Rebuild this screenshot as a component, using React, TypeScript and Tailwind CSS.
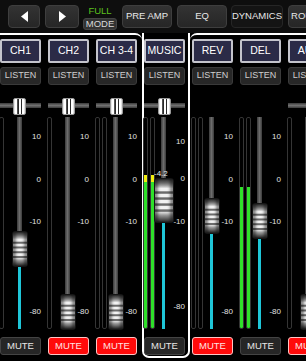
import React from "react";

const NARROW = "font-['Liberation_Sans_Narrow','Liberation_Sans',Arial,sans-serif]";

const FADER_KNOB =
  "bg-[linear-gradient(to_bottom,#3a3a3a_0%,#666_9%,#a8a8a8_16%,#f2f2f2_22%,#f2f2f2_27%,#6c6c6c_30%,#6c6c6c_33%,#f2f2f2_36%,#f2f2f2_41%,#6c6c6c_44%,#6c6c6c_47%,#f2f2f2_50%,#f2f2f2_55%,#6c6c6c_58%,#6c6c6c_61%,#f2f2f2_64%,#f2f2f2_69%,#6c6c6c_72%,#6c6c6c_75%,#d8d8d8_78%,#9a9a9a_84%,#606060_92%,#333_100%)] border border-[#151515] rounded-[3px] shadow-[inset_3px_0_3px_rgba(0,0,0,0.45),inset_-3px_0_3px_rgba(0,0,0,0.45)]";

const PAN_KNOB =
  "bg-[linear-gradient(to_right,#d8d8d8_0%,#fff_12%,#fff_31%,#2a2a2a_32%,#2a2a2a_46%,#fff_47%,#fff_61%,#2a2a2a_62%,#2a2a2a_76%,#fff_77%,#fff_88%,#cfcfcf_100%)] border border-[#9a9a9a] rounded-[2px]";

type StripData = {
  name: string;
  meters: number[];
  yellow?: boolean;
  panTrack: boolean;
  pan: number | null;
  knobTop: number;
  big?: boolean;
  muted: boolean;
  labels?: number[];
  readout?: string;
  widthClass: string;
};

const DEFAULT_LABELS = [20, 63, 105, 195];
const LABEL_TEXT = ["10", "0", "-10", "-80"];

function Meter({ level, yellow }: { level: number; yellow?: boolean }) {
  return (
    <div className="w-[5px] h-full border border-[#353535] rounded-[2px] flex flex-col justify-end overflow-hidden">
      {level > 0 && (
        <div className="w-full flex flex-col" style={{ height: level }}>
          {yellow && <div className="h-[7px] bg-[#f0ee10]" />}
          <div className="flex-1 bg-[#2fe02a]" />
        </div>
      )}
    </div>
  );
}

function Strip({ s }: { s: StripData }) {
  const kh = s.big ? 45 : 36;
  const labels = s.labels ?? DEFAULT_LABELS;
  return (
    <div className={`shrink-0 flex flex-col ${s.widthClass}`}>
      <div className="mt-[4px] h-[24px] w-[41px] flex items-center justify-center border-2 border-[#c4c4cc] bg-[#2b2b47] text-white text-[10.5px] rounded-[2px] whitespace-nowrap">
        {s.name}
      </div>
      <div className="mt-[4px] h-[18px] w-[41px] flex items-center justify-center rounded-[3px] border border-[#3a3a3a] bg-[#272727] text-[9px] text-[#cfcfcf]">
        LISTEN
      </div>
      <div className="relative h-[32px] w-[41px] pt-[18px]">
        {s.panTrack && (
          <div className="h-[5px] w-full bg-[linear-gradient(to_bottom,#3a3a3a,#707070,#3a3a3a)]" />
        )}
        {s.pan !== null && (
          <div className={`absolute top-[13px] w-[13px] h-[17px] ${PAN_KNOB}`} style={{ left: s.pan }} />
        )}
      </div>
      <div className="relative h-[213px] w-[41px] flex">
        <div className="-ml-[1px] w-[17px] h-[212px] flex gap-[2px]">
          {s.meters.map((m, i) => (
            <Meter key={i} level={m} yellow={s.yellow} />
          ))}
        </div>
        <div className="ml-[1px] w-[5px] h-[212px] flex flex-col items-center">
          <div
            className="w-[5px] shrink-0 bg-[linear-gradient(to_right,#3a3a3a,#6c6c6c,#3a3a3a)]"
            style={{ height: s.knobTop + kh / 2 }}
          />
          <div className="w-[3px] flex-1 bg-[#1fc6d8]" />
        </div>
        {labels.map((c, i) => (
          <div
            key={i}
            className="absolute right-0 text-[8px] leading-[10px] text-[#e2e2e2]"
            style={{ top: c - 5 }}
          >
            {LABEL_TEXT[i]}
          </div>
        ))}
        {s.readout && (
          <div className="absolute left-[10px] top-[52px] text-[8px] leading-[10px] text-[#e6e6e6]">{s.readout}</div>
        )}
        <div
          className={`absolute ${s.big ? "w-[20px] h-[45px] left-[10px]" : "w-[16px] h-[36px] left-[12px]"} ${FADER_KNOB}`}
          style={{ top: s.knobTop }}
        />
      </div>
      <div
        className={`mt-[7px] h-[18px] w-[41px] flex items-center justify-center rounded-[3px] text-[9.5px] ${
          s.muted
            ? "bg-[#ff0a0a] border border-[#ffc4c4] text-[#ffe4e4]"
            : "bg-[#262626] border border-[#444] text-[#e6e6e6]"
        }`}
      >
        MUTE
      </div>
    </div>
  );
}

function TopBtn({
  cls,
  selected,
  children,
}: {
  cls: string;
  selected?: boolean;
  children: React.ReactNode;
}) {
  return (
    <div
      className={`h-[23px] shrink-0 flex items-center justify-center rounded-[4px] border text-[9.5px] text-[#e8e8e8] whitespace-nowrap overflow-hidden ${
        selected
          ? "bg-[#141414] border-[#262626]"
          : "bg-[linear-gradient(to_bottom,#333,#262626)] border-[#3e3e3e]"
      } ${cls}`}
    >
      {children}
    </div>
  );
}

const group1: StripData[] = [
  { name: "CH1", meters: [0], panTrack: true, pan: 13, knobTop: 114, muted: false, widthClass: "w-[48px]" },
  { name: "CH2", meters: [0], panTrack: true, pan: 14, knobTop: 177, muted: true, widthClass: "w-[48px]" },
  { name: "CH 3-4", meters: [0, 0], panTrack: true, pan: 14, knobTop: 177, muted: true, widthClass: "w-[46px]" },
];

const music: StripData = {
  name: "MUSIC",
  meters: [153, 153],
  yellow: true,
  panTrack: true,
  pan: 14,
  knobTop: 61,
  big: true,
  muted: false,
  labels: [25, 62, 105, 190],
  readout: "-4.2",
  widthClass: "w-[44px]",
};

const group2: StripData[] = [
  { name: "REV", meters: [0, 0], panTrack: false, pan: null, knobTop: 81, muted: true, widthClass: "w-[48px]" },
  { name: "DEL", meters: [141, 141], panTrack: false, pan: null, knobTop: 86, muted: false, widthClass: "w-[48px]" },
  { name: "AUX", meters: [0], panTrack: true, pan: 30, knobTop: 177, muted: true, widthClass: "w-[48px]" },
];

export default function App() {
  return (
    <div className={`w-[306px] h-[361px] overflow-hidden bg-black select-none ${NARROW}`}>
      <div className="h-[33px] bg-[#0e0e0e] flex items-start pt-[5px] pl-[8px] overflow-hidden">
        <TopBtn cls="w-[32px]">
          <svg width="7" height="11" viewBox="0 0 7 11">
            <polygon points="7,0 7,11 0,5.5" fill="#fff" />
          </svg>
        </TopBtn>
        <TopBtn cls="w-[34px] ml-[5px]">
          <svg width="7" height="11" viewBox="0 0 7 11">
            <polygon points="0,0 7,5.5 0,11" fill="#fff" />
          </svg>
        </TopBtn>
        <div className="ml-[4px] w-[34px] shrink-0 flex flex-col items-center">
          <div className="h-[13px] flex items-center text-[9.5px] text-[#5cc21e]">FULL</div>
          <div className="h-[12px] w-[34px] flex items-center justify-center rounded-[3px] border border-[#444] bg-[#333] text-[9.5px] text-[#d8d8d8]">
            MODE
          </div>
        </div>
        <TopBtn cls="w-[50px] ml-[5px]">PRE AMP</TopBtn>
        <TopBtn cls="w-[50px] ml-[5px]">EQ</TopBtn>
        <TopBtn cls="w-[52px] ml-[4px]" selected>
          DYNAMICS
        </TopBtn>
        <TopBtn cls="w-[50px] ml-[5px]">ROUTING</TopBtn>
      </div>
      <div className="flex items-start h-[328px]">
        <div className="w-[142px] shrink-0 self-stretch border-t-2 border-white rounded-tr-[7px] flex">
          {group1.map((s) => (
            <Strip key={s.name} s={s} />
          ))}
        </div>
        <div className="w-[48px] shrink-0 border-l-2 border-r-2 border-b-2 border-white rounded-b-[7px] pt-[2px] pb-[1px]">
          <Strip s={music} />
        </div>
        <div className="flex-1 self-stretch border-t-2 border-white rounded-tl-[7px] pl-[2px] flex overflow-hidden">
          {group2.map((s) => (
            <Strip key={s.name} s={s} />
          ))}
        </div>
      </div>
    </div>
  );
}
